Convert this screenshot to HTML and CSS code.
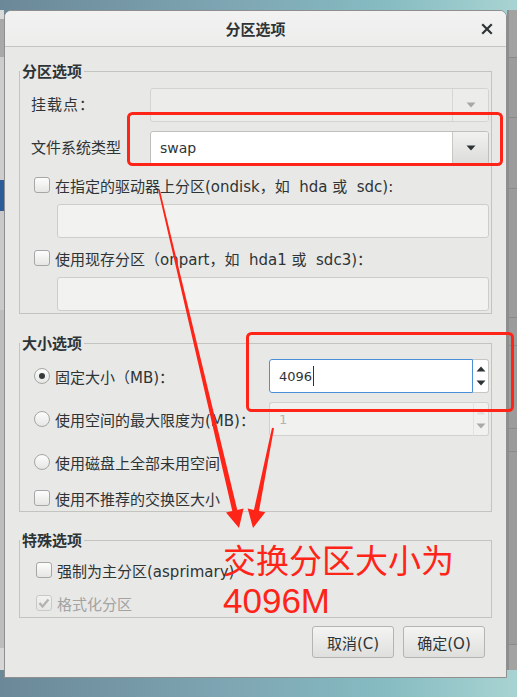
FILE: index.html
```html
<!DOCTYPE html>
<html lang="zh-CN">
<head>
<meta charset="utf-8">
<title>分区选项</title>
<link rel="stylesheet" href="styles.css">
</head>
<body>
<div class="desktop">
  <div class="bg-left"></div>
  <div class="bg-right"></div>

  <div class="dialog">
    <div class="titlebar">
      <span class="title">分区选项</span>
      <svg class="close" width="12" height="12" viewBox="0 0 12 12"><path d="M2 2 L10 10 M10 2 L2 10" stroke="#2e3436" stroke-width="2.2" stroke-linecap="square"/></svg>
    </div>

    <div class="body">
      <fieldset class="frame f1">
        <legend>分区选项</legend>
        <div class="inner">
          <div class="form-row">
            <span class="label spaced">挂载点：</span>
            <div class="combo disabled">
              <div class="combo-text"></div>
              <div class="combo-btn"><svg width="10" height="6" viewBox="0 0 10 6"><path d="M0.5 0.5 H9.5 L5 5.5 Z" fill="#a7a7a7"/></svg></div>
            </div>
          </div>
          <div class="form-row gap9">
            <span class="label">文件系统类型</span>
            <div class="combo">
              <div class="combo-text">swap</div>
              <div class="combo-btn"><svg width="10" height="6" viewBox="0 0 10 6"><path d="M0.5 0.5 H9.5 L5 5.5 Z" fill="#2e3436"/></svg></div>
            </div>
          </div>
          <div class="check-row gap10">
            <span class="checkbox"></span>
            <span>在指定的驱动器上分区(ondisk，如&nbsp; hda 或&nbsp; sdc):</span>
          </div>
          <div class="entry gap9 indent"></div>
          <div class="check-row gap10">
            <span class="checkbox"></span>
            <span>使用现存分区（onpart，如&nbsp; hda1 或&nbsp; sdc3)：</span>
          </div>
          <div class="entry gap9 indent"></div>
        </div>
      </fieldset>

      <fieldset class="frame f2">
        <legend>大小选项</legend>
        <div class="inner">
          <div class="size-row">
            <div class="check-row"><span class="radio checked"></span><span>固定大小（MB)：</span></div>
            <div class="spin focused">
              <div class="spin-text">4096<span class="caret"></span></div>
              <div class="spin-btns">
                <svg width="10" height="6" viewBox="0 0 10 6"><path d="M0.5 5.5 H9.5 L5 0.5 Z" fill="#2e3436"/></svg>
                <svg width="10" height="6" viewBox="0 0 10 6"><path d="M0.5 0.5 H9.5 L5 5.5 Z" fill="#2e3436"/></svg>
              </div>
            </div>
          </div>
          <div class="size-row gap9">
            <div class="check-row"><span class="radio"></span><span>使用空间的最大限度为(MB)：</span></div>
            <div class="spin disabled">
              <div class="spin-text">1</div>
              <div class="spin-btns">
                <svg width="10" height="6" viewBox="0 0 10 6"><path d="M0.5 5.5 H9.5 L5 0.5 Z" fill="#dedede"/></svg>
                <svg width="10" height="6" viewBox="0 0 10 6"><path d="M0.5 0.5 H9.5 L5 5.5 Z" fill="#a9a9a9"/></svg>
              </div>
            </div>
          </div>
          <div class="check-row gap16"><span class="radio"></span><span>使用磁盘上全部未用空间</span></div>
          <div class="check-row gap16"><span class="checkbox"></span><span>使用不推荐的交换区大小</span></div>
        </div>
      </fieldset>

      <fieldset class="frame f3">
        <legend>特殊选项</legend>
        <div class="inner">
          <div class="check-row"><span class="checkbox"></span><span>强制为主分区(asprimary)</span></div>
          <div class="check-row gap13 muted">
            <span class="checkbox checked-disabled"><svg width="14" height="14" viewBox="0 0 14 14"><path d="M2.5 7 L5.5 10.5 L11.5 3.5" fill="none" stroke="#b4b4b4" stroke-width="2.4"/></svg></span>
            <span>格式化分区</span>
          </div>
        </div>
      </fieldset>

      <div class="buttons">
        <button class="btn">取消(C)</button>
        <button class="btn">确定(O)</button>
      </div>
    </div>
  </div>

  <svg class="annot" width="517" height="697" viewBox="0 0 517 697">
    <rect x="128.5" y="113.5" width="373" height="51" rx="4" fill="none" stroke="#ff2418" stroke-width="3"/>
    <rect x="247.5" y="333.5" width="265" height="77" rx="4" fill="none" stroke="#ff2418" stroke-width="3"/>
    <polygon points="159.8,189.8 237.3,509.9 243.6,508.4 239,528 226,512.6 232.3,511.1 158.2,190.2" fill="#ff2418"/>
    <polygon points="274,428.2 259.05,510.9 265.3,512.2 253,528 247.7,508.6 253.95,509.9 272,427.8" fill="#ff2418"/>
  </svg>

  <div class="note">
    <div class="note-cn">交换分区大小为</div>
    <div class="note-num">4096M</div>
  </div>
</div>
</body>
</html>
```

FILE: styles.css
```css
* { box-sizing: border-box; }

html, body {
  margin: 0;
  padding: 0;
}

body {
  width: 517px;
  height: 697px;
  overflow: hidden;
  font-family: "DejaVu Sans", "Noto Sans CJK SC", sans-serif;
  font-size: 15px;
  color: #2e3436;
}

.desktop {
  position: relative;
  width: 517px;
  height: 697px;
  background: linear-gradient(90deg, #6b8898 0%, #7ea6b3 45%, #86bcc2 75%, #a9d3d2 100%);
}

.bg-left {
  position: absolute;
  left: 0;
  top: 10px;
  width: 4px;
  height: 660px;
  background: linear-gradient(to bottom,
    #d9d9d9 0, #d9d9d9 9px,
    #a9a9a9 9px, #a9a9a9 47px,
    #cdcdcd 47px, #cdcdcd 170px,
    #2c5d9a 170px, #2c5d9a 201px,
    #c9c9c9 201px, #c9c9c9 300px,
    #bdbdbd 300px, #bdbdbd 638px,
    #d6d6d6 638px, #d6d6d6 660px);
}

.bg-right {
  position: absolute;
  left: 507px;
  top: 10px;
  width: 10px;
  height: 660px;
  border-left: 2px solid #8d8d8d;
  background: linear-gradient(to bottom,
    #a2a2a2 0, #a2a2a2 47px,
    #8a8a8a 47px, #8a8a8a 48px,
    #9c9c9c 48px, #9c9c9c 107px,
    #8a8a8a 107px, #8a8a8a 108px,
    #9c9c9c 108px, #9c9c9c 178px,
    #8a8a8a 178px, #8a8a8a 179px,
    #9c9c9c 179px, #9c9c9c 307px,
    #8a8a8a 307px, #8a8a8a 308px,
    #9c9c9c 308px, #9c9c9c 335px,
    #8a8a8a 335px, #8a8a8a 336px,
    #9c9c9c 336px, #9c9c9c 418px,
    #8a8a8a 418px, #8a8a8a 419px,
    #9c9c9c 419px, #9c9c9c 441px,
    #8a8a8a 441px, #8a8a8a 442px,
    #9c9c9c 442px, #9c9c9c 634px,
    #8a8a8a 634px, #8a8a8a 635px,
    #a3a3a3 635px);
}

/* dialog window */
.dialog {
  position: absolute;
  left: 4px;
  top: 10px;
  width: 503px;
  height: 668px;
  background: #e8e8e7;
  border: 1px solid #8f8f8f;
  border-radius: 7px 7px 0 0;
  display: flex;
  flex-direction: column;
  overflow: hidden;
}

.titlebar {
  height: 36px;
  flex: none;
  background: linear-gradient(#f2f2f2, #ededec);
  border-bottom: 1px solid #c4c4c2;
  display: flex;
  align-items: center;
  justify-content: center;
  position: relative;
}

.title {
  font-weight: bold;
  font-size: 15px;
  color: #2e3436;
  font-family: "Noto Sans CJK SC", sans-serif;
}

.close {
  position: absolute;
  right: 13px;
  top: 12px;
}

.body {
  flex: 1;
  padding: 14px 14px 0 14px;
  display: flex;
  flex-direction: column;
}

/* frames */
.frame {
  margin: 0;
  padding: 0;
  border: 1px solid #c3c3c0;
  min-width: 0;
}

.frame legend {
  padding: 0 2px;
  margin-left: 0;
  font-weight: bold;
  font-size: 15px;
  line-height: 20px;
  height: 20px;
  color: #2e3436;
  font-family: "Noto Sans CJK SC", sans-serif;
}

.frame .inner {
  display: flex;
  flex-direction: column;
  padding-left: 11px;
  padding-right: 2px;
}

.f1 .inner { padding-top: 7px; padding-bottom: 2px; }
.f2 { margin-top: 19px; }
.f2 .inner { padding-top: 6px; padding-bottom: 3px; }
.f3 { margin-top: 18px; }
.f3 .inner { padding-top: 10px; padding-bottom: 4px; padding-left: 13px; }

.gap9 { margin-top: 9px; }
.gap10 { margin-top: 10px; }
.gap13 { margin-top: 13px; }
.gap16 { margin-top: 16px; }

.form-row {
  display: flex;
  align-items: center;
  height: 34px;
}

.label {
  width: 119px;
  flex: none;
  line-height: 20px;
}

.label.spaced { letter-spacing: 1px; }

/* combos */
.combo {
  flex: 1;
  height: 34px;
  display: flex;
  border: 1px solid #bfbfbc;
  border-radius: 3px;
  background: #ffffff;
  overflow: hidden;
}

.combo-text {
  flex: 1;
  padding-left: 9px;
  display: flex;
  align-items: center;
  font-size: 14px;
  color: #2e3436;
}

.combo-btn {
  width: 36px;
  flex: none;
  display: flex;
  align-items: center;
  justify-content: center;
  border-left: 1px solid #c7c7c4;
  background: linear-gradient(#f1f1f0, #dcdcda);
}

.combo.disabled {
  background: #ececeb;
  border-color: #d3d3d0;
}

.combo.disabled .combo-btn {
  background: #ececeb;
  border-left-color: #d6d6d3;
}

/* check rows */
.check-row {
  display: flex;
  align-items: center;
  height: 20px;
  padding-left: 3px;
  gap: 5px;
  white-space: nowrap;
}

.checkbox {
  width: 16px;
  height: 16px;
  flex: none;
  border: 1px solid #a6a6a3;
  border-radius: 3px;
  background: linear-gradient(#fdfdfd, #e6e6e5);
  display: flex;
  align-items: center;
  justify-content: center;
}

.checkbox.checked-disabled {
  border-color: #c9c9c7;
  background: linear-gradient(#f2f2f1, #e6e6e5);
}

.muted { color: #a3a3a1; }

.radio {
  width: 16px;
  height: 16px;
  flex: none;
  border: 1px solid #a6a6a3;
  border-radius: 50%;
  background: linear-gradient(#fdfdfd, #e6e6e5);
  display: flex;
  align-items: center;
  justify-content: center;
}

.radio.checked::after {
  content: "";
  width: 6px;
  height: 6px;
  border-radius: 50%;
  background: #353a3c;
}

/* entries */
.entry {
  height: 34px;
  border: 1px solid #cdcdca;
  border-radius: 3px;
  background: #f2f2f1;
}

.entry.indent { margin-left: 26px; }

/* size rows */
.size-row {
  display: grid;
  grid-template-columns: 238px 1fr;
  align-items: center;
  height: 34px;
}

.spin {
  height: 34px;
  display: flex;
}

.spin-text {
  flex: 1;
  display: flex;
  align-items: center;
  padding-left: 9px;
  font-size: 13px;
  border-radius: 3px 0 0 3px;
}

.spin-btns {
  width: 16px;
  flex: none;
  display: flex;
  flex-direction: column;
  align-items: center;
  justify-content: space-between;
  padding: 6px 0;
  border: 1px solid #c6c6c3;
  border-left: none;
  border-radius: 0 3px 3px 0;
}

.spin.focused .spin-text {
  border: 1px solid #4a90d9;
  background: #ffffff;
  color: #2e3436;
}

.spin.focused .spin-btns {
  background: #ffffff;
}

.caret {
  display: inline-block;
  width: 1px;
  height: 20px;
  background: #2e3436;
  margin-left: 1px;
}

.spin.disabled .spin-text {
  border: 1px solid #d1d1ce;
  border-right: none;
  background: #f1f1f0;
  color: #b3b3b1;
}

.spin.disabled .spin-btns {
  background: #f1f1f0;
  border-color: #d1d1ce;
  border-left: 1px solid #e2e2df;
}

/* buttons */
.buttons {
  display: flex;
  justify-content: flex-end;
  gap: 9px;
  margin-top: 8px;
  padding-right: 7px;
}

.btn {
  width: 82px;
  height: 32px;
  border: 1px solid #b4b4b1;
  border-radius: 3px;
  background: linear-gradient(#f4f4f3, #dfdfdd);
  font-family: "DejaVu Sans", "Noto Sans CJK SC", sans-serif;
  font-size: 15px;
  color: #2e3436;
  padding: 0;
}

/* annotations */
.annot {
  position: absolute;
  left: 0;
  top: 0;
  pointer-events: none;
}

.note {
  position: absolute;
  left: 223px;
  top: 539px;
  color: #ff2418;
  pointer-events: none;
}

.note-cn {
  font-family: "Noto Sans CJK SC", sans-serif;
  font-size: 33px;
  line-height: 40px;
  height: 40px;
  white-space: nowrap;
}

.note-num {
  font-family: "Liberation Sans", sans-serif;
  font-size: 35px;
  line-height: 40px;
  height: 40px;
  margin-top: 2px;
}
```
